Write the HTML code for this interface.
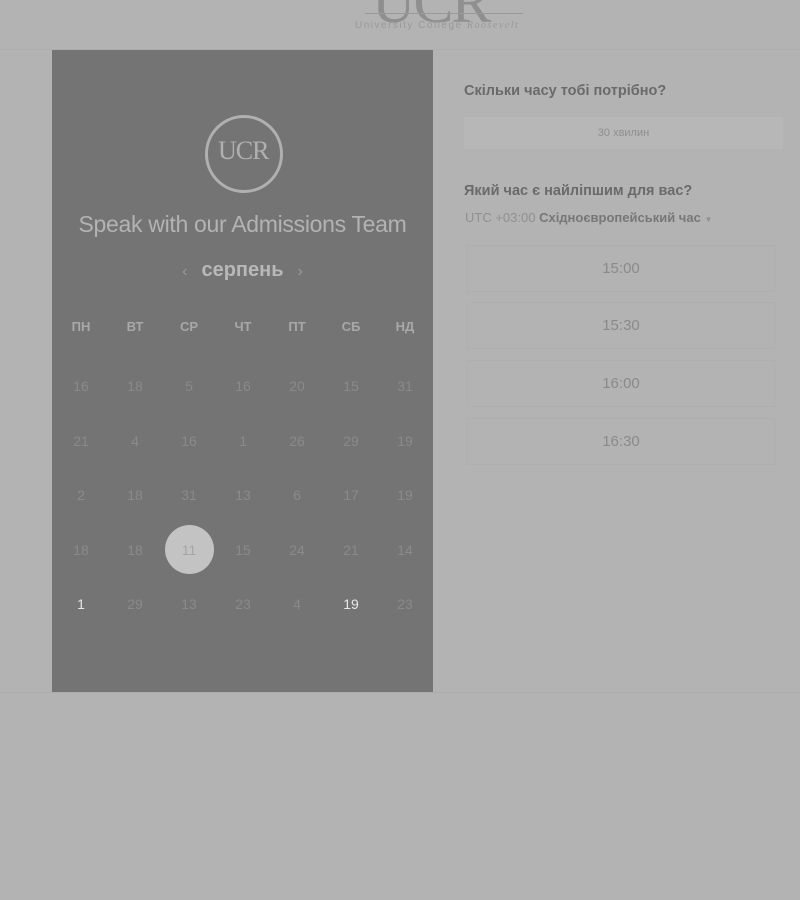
<!DOCTYPE html>
<html><head><meta charset="utf-8"><style>
body{margin:0;width:800px;height:900px;background:#b3b3b3;font-family:"Liberation Sans",sans-serif;position:relative;overflow:hidden}
.a{position:absolute}
.panel{left:52px;top:50px;width:381px;height:642px;background:#747474}
.d{position:absolute;width:40px;margin-left:-20px;text-align:center;font-size:14px;color:#8a8a8a}
.h{position:absolute;width:40px;margin-left:-20px;text-align:center;font-size:13px;font-weight:bold;color:#a8a8a8}
.slot{position:absolute;left:467px;width:308px;height:47px;border:1px solid #afafaf;box-sizing:border-box;text-align:center;line-height:46px;font-size:15px;color:#8a8a8a}
</style></head><body>
<div class="a" style="left:0;top:49px;width:800px;height:1px;background:#adadad"></div>
<div class="a" style="left:0;top:692px;width:800px;height:1px;background:#adadad"></div>
<div class="a" style="left:372px;top:-32px;font-family:'Liberation Serif',serif;font-size:60px;color:#8f8f8f;letter-spacing:-2px">UCR</div>
<div class="a" style="left:365px;top:13px;width:158px;height:1px;background:#999"></div>
<div class="a" style="left:355px;top:20px;font-size:10px;color:#999;letter-spacing:1.5px;white-space:nowrap">University College <i style="font-family:'Liberation Serif',serif">Roosevelt</i></div>
<div class="a panel"></div>
<div class="a" style="left:205px;top:115px;width:72px;height:72px;border:3px solid #b0b0b0;border-radius:50%"></div>
<div class="a" style="left:218px;top:136px;font-family:'Liberation Serif',serif;font-size:26px;color:#b0b0b0;letter-spacing:-1px">UCR</div>
<div class="a" style="left:52px;top:211px;width:381px;text-align:center;font-size:23px;letter-spacing:-0.3px;color:#b3b3b3">Speak with our Admissions Team</div>
<div class="a" style="left:52px;top:259px;width:381px;text-align:center;font-size:20px;font-weight:bold;color:#b8b8b8"><span style="color:#999;font-size:16px;font-weight:normal;margin-right:14px">‹</span>серпень<span style="color:#999;font-size:16px;font-weight:normal;margin-left:14px">›</span></div>
<div id="cal"></div>
<div class="a" style="left:165px;top:525px;width:49px;height:49px;border-radius:50%;background:#c3c3c3"></div>
<div class="a" style="left:464px;top:83px;font-size:14.5px;font-weight:bold;color:#6a6a6a">Скільки часу тобі потрібно?</div>
<div class="a" style="left:464px;top:117px;width:319px;height:32px;background:#b7b7b7;text-align:center;line-height:32px;font-size:11px;color:#8e8e8e">30 хвилин</div>
<div class="a" style="left:464px;top:183px;font-size:14.5px;font-weight:bold;color:#6a6a6a">Який час є найліпшим для вас?</div>
<div class="a" style="left:465px;top:210px;font-size:13px;color:#909090">UTC +03:00 <b style="color:#777">Східноєвропейський час</b> <span style="font-size:8px">▼</span></div>
<div class="slot" style="top:245px">15:00</div>
<div class="slot" style="top:302px">15:30</div>
<div class="slot" style="top:360px">16:00</div>
<div class="slot" style="top:418px">16:30</div>
<script>
var xs=[81,135,189,243,297,351,405],hd=["ПН","ВТ","СР","ЧТ","ПТ","СБ","НД"];
var rows=[[16,18,5,16,20,15,31],[21,4,16,1,26,29,19],[2,18,31,13,6,17,19],[18,18,11,15,24,21,14],[1,29,13,23,4,19,23]];
var ys=[378,433,487,542,596],h="";
for(var i=0;i<7;i++)h+='<div class="h" style="left:'+xs[i]+'px;top:319px">'+hd[i]+'</div>';
rows.forEach(function(r,j){r.forEach(function(v,i){var c=(j==4&&(i==0||i==5))?'#e8e8e8':(j==3&&i==2)?'#a5a5a5':'#8a8a8a';h+='<div class="d" style="z-index:2;left:'+xs[i]+'px;top:'+ys[j]+'px;color:'+c+'">'+v+'</div>';});});
document.getElementById('cal').innerHTML=h;
</script>
</body></html>
